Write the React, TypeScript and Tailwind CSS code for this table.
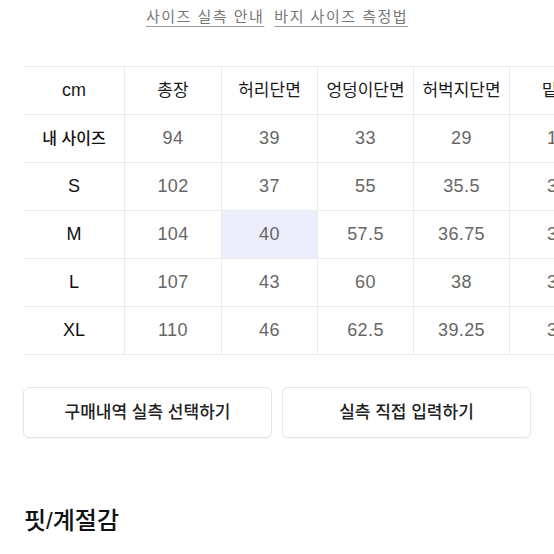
const headers = ["cm", "총장", "허리단면", "엉덩이단면", "허벅지단면", "밑위", "밑단단면"];

const rows = [
  { label: "내 사이즈", values: ["94", "39", "33", "29", "13", "11"] },
  { label: "S", values: ["102", "37", "55", "35.5", "30", "21"] },
  { label: "M", values: ["104", "40", "57.5", "36.75", "31", "22"] },
  { label: "L", values: ["107", "43", "60", "38", "32", "23"] },
  { label: "XL", values: ["110", "46", "62.5", "39.25", "33", "24"] },
];

const colWidths = ["w-[101px]", "w-[97px]", "w-[96px]", "w-[96px]", "w-[96px]", "w-[96px]", "w-[96px]"];

const App = () => {
  return (
    <div className="w-[554px] h-[554px] overflow-hidden bg-white font-['Liberation_Sans','Noto_Sans_CJK_KR',sans-serif]">
      {/* Guide links */}
      <div className="h-[66px] flex justify-center gap-[10px] pt-[5px]">
        <span className="text-[15px] leading-[24px] tracking-[1.5px] text-[#777] underline underline-offset-[4px] decoration-[#999]">사이즈 실측 안내</span>
        <span className="text-[15px] leading-[24px] tracking-[1.5px] text-[#777] underline underline-offset-[4px] decoration-[#999]">바지 사이즈 측정법</span>
      </div>

      {/* Size table */}
      <div className="ml-[24px] w-max border-t border-[#ebebeb]">
        <div className="flex">
          {headers.map((h, i) => (
            <div
              key={h}
              className={`${colWidths[i]} shrink-0 h-[48px] flex items-center justify-center border-b border-r border-[#ebebeb] text-[#1a1a1a] ${i === 0 ? "text-[18px]" : "text-[17px]"}`}
            >
              {h}
            </div>
          ))}
        </div>
        {rows.map((row) => (
          <div key={row.label} className="flex">
            <div
              className={`w-[101px] shrink-0 h-[48px] flex items-center justify-center border-b border-r border-[#ebebeb] text-[#111] ${row.label === "내 사이즈" ? "text-[16px] font-medium" : "text-[18px]"}`}
            >
              {row.label}
            </div>
            {row.values.map((v, i) => (
              <div
                key={i}
                className={`${colWidths[i + 1]} shrink-0 h-[48px] flex items-center justify-center border-b border-r border-[#ebebeb] text-[18px] tracking-[0.4px] text-[#666] ${row.label === "M" && i === 1 ? "bg-[#eceefb]" : ""}`}
              >
                {v}
              </div>
            ))}
          </div>
        ))}
      </div>

      {/* Actions */}
      <div className="px-[23px] mt-[32px] grid grid-cols-2 gap-[10px]">
        <button className="h-[51px] rounded-[6px] border border-[#e6e6e6] bg-white shadow-[0_1px_2px_rgba(0,0,0,0.04)] text-[17px] font-medium text-[#222]">
          구매내역 실측 선택하기
        </button>
        <button className="h-[51px] rounded-[6px] border border-[#e6e6e6] bg-white shadow-[0_1px_2px_rgba(0,0,0,0.04)] text-[17px] font-medium text-[#222]">
          실측 직접 입력하기
        </button>
      </div>

      {/* Fit / season */}
      <h2 className="mt-[68px] px-[24px] text-[24px] leading-[30px] font-medium text-[#111]">핏/계절감</h2>
    </div>
  );
};

export default App;
